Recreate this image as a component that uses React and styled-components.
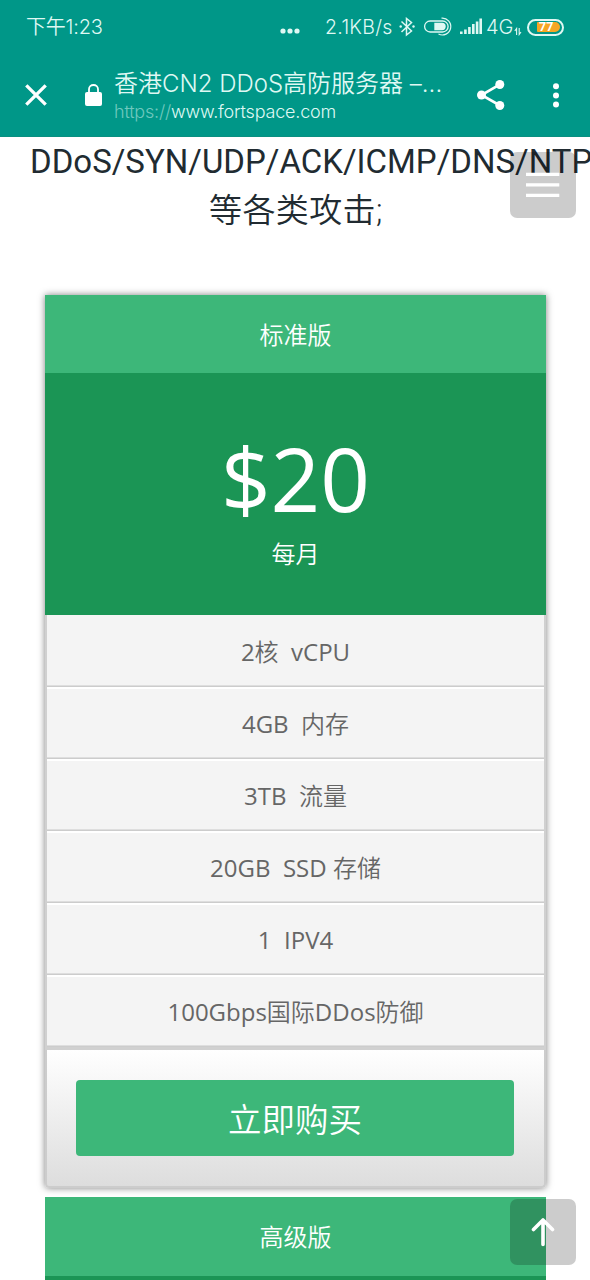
import styled, {createGlobalStyle} from 'styled-components'

const features = [
  '2核\u00a0 vCPU',
  '4GB\u00a0 内存',
  '3TB\u00a0 流量',
  '20GB\u00a0 SSD 存储',
  '1\u00a0 IPV4',
  '100Gbps国际DDos防御',
]

// chinese runs are set a little lighter than the latin ones
const splitHan = (text) => text.split(/([\u4e00-\u9fff]+)/)

const StatusBar = () => {
  return (
    <Status>
      <Clock>下午1:23</Clock>
      <StatusIcons>
        <svg width='20' height='6' viewBox='0 0 20 6' fill='#dff8f3'>
          <circle cx='3' cy='3' r='2.6' />
          <circle cx='10' cy='3' r='2.6' />
          <circle cx='17' cy='3' r='2.6' />
        </svg>
        <Speed>2.1KB/s</Speed>
        {/* bluetooth, sync toggle and signal */}
        <svg width='84' height='20' viewBox='398 17 84 20' fill='none' stroke='#dff8f3'>
          <path d='M401.5 21.5 L411.5 31 L406.5 35 V18.5 L411.5 22.5 L401.5 32' strokeWidth='1.5' />
          <circle cx='400.7' cy='26.5' r='1.2' fill='#dff8f3' stroke='none' />
          <circle cx='413.5' cy='26.5' r='1.2' fill='#dff8f3' stroke='none' />
          <rect x='424.6' y='21' width='23.5' height='11' rx='5.5' strokeWidth='1.3' />
          <path d='M434.3 22.8 H442 A3.7 3.7 0 0 1 442 30.2 H434.3 Z' fill='#dff8f3' stroke='none' />
          <path d='M441.5 18.2 A8.4 8.4 0 1 1 438.5 34' strokeWidth='1.2' />
          <path d='M461.3 34 V31.5 M465.4 34 V29.5 M469.4 34 V27 M473.3 34 V24 M477.1 34 V21.5 M480.7 34 V18.5' strokeWidth='2.6' />
        </svg>
        <Network>4G</Network>
        <svg width='8' height='9' viewBox='0 0 8 9' fill='none' stroke='#dff8f3' strokeWidth='1.1'>
          <path d='M2.6 8 V1.5 L.8 4 M5.2 1 V7.5 L7 5' />
        </svg>
        <Battery>
          <Charge>77</Charge>
        </Battery>
      </StatusIcons>
    </Status>
  )
}

const Toolbar = () => {
  return (
    <Bar>
      <svg width='22' height='22' viewBox='0 0 22 22' stroke='#fff' strokeWidth='3.3'>
        <path d='M1.3 1.3 L20.7 20.7 M20.7 1.3 L1.3 20.7' />
      </svg>
      <LockIcon width='17' height='22' viewBox='0 0 17 22'>
        <path d='M4 9 V5.2 a4.5 4.2 0 0 1 9 0 V9' fill='none' stroke='#fff' strokeWidth='1.8' />
        <rect x='0' y='8' width='17' height='14' rx='2' fill='#fff' />
      </LockIcon>
      <Page>
        <Title>香港CN2 DDoS高防服务器 –...</Title>
        <Url><span>https://</span>www.fortspace.com</Url>
      </Page>
      <ShareIcon width='28' height='30' viewBox='0 0 28 30'>
        <path d='M23 4.3 L4.5 15 L23 25.5' fill='none' stroke='#fff' strokeWidth='2.6' />
        <circle cx='22.8' cy='4.5' r='4.5' fill='#fff' />
        <circle cx='4.5' cy='15' r='4.5' fill='#fff' />
        <circle cx='22.8' cy='25.5' r='4.5' fill='#fff' />
      </ShareIcon>
      <svg width='6' height='25' viewBox='0 0 6 25' fill='#fff'>
        <circle cx='3' cy='3.3' r='3' />
        <circle cx='3' cy='12.4' r='3' />
        <circle cx='3' cy='21.5' r='3' />
      </svg>
    </Bar>
  )
}

const App = () => {
  return (
    <Wrapper>
      <GlobalStyle />
      <Header>
        <StatusBar />
        <Toolbar />
      </Header>
      <Intro>
        <Protocols>DDoS/SYN/UDP/ACK/ICMP/DNS/NTP</Protocols>
        <Attacks>等各类攻击;</Attacks>
      </Intro>
      <Plans>
        <Card>
          <PlanName>标准版</PlanName>
          <PriceBox>
            <Price>$20</Price>
            <Period>每月</Period>
          </PriceBox>
          <Features>
            {features.map((item) => (
              <li key={item}>
                {splitHan(item).map((part, i) =>
                  i % 2 ? <Han key={i}>{part}</Han> : part
                )}
              </li>
            ))}
          </Features>
          <CardFooter>
            <BuyButton type='button'>立即购买</BuyButton>
          </CardFooter>
        </Card>
        <Card $flat>
          <PlanName $tall>高级版</PlanName>
          <PriceBox />
        </Card>
      </Plans>
      <FloatButton $top='152px' aria-label='menu'>
        <svg width='34' height='26' viewBox='0 0 34 26' stroke='#fff' strokeWidth='3.3'>
          <path d='M0 2.4 H33.3 M0 12.8 H33.3 M0 23.3 H33.3' />
        </svg>
      </FloatButton>
      <FloatButton $top='1199px' aria-label='back to top'>
        <svg width='24' height='30' viewBox='0 0 24 30' fill='none' stroke='#fff' strokeWidth='3.6' strokeLinecap='round' strokeLinejoin='round'>
          <path d='M12 27.5 V3 M2.5 12.5 L12 3 L21.5 12.5' />
        </svg>
      </FloatButton>
    </Wrapper>
  )
}

const GlobalStyle = createGlobalStyle`
  * {
    box-sizing: border-box;
  }
  body {
    margin: 0;
    background: #fff;
    font-family: 'Open Sans', 'Noto Sans CJK SC', sans-serif;
  }
`

const Wrapper = styled.main`
  position: relative;
  width: 590px;
  height: 1280px;
  overflow: hidden;
`

const Header = styled.header`
  height: 137px;
  background: #009788;
  border-bottom: 1px solid #0a9081;
  color: #dff8f3;
  font-family: Inter, 'Noto Sans CJK SC', sans-serif;
  font-weight: 350;
  white-space: nowrap;
`

const Status = styled.div`
  display: flex;
  justify-content: space-between;
  height: 54px;
  padding: 0 26px;
`

const Clock = styled.div`
  font-size: 20px;
  line-height: 55px;
  letter-spacing: -0.2px;
`

const StatusIcons = styled.div`
  display: flex;
  align-items: center;
  > svg:first-child {
    margin: 8px 25px 0 0;
  }
  > svg:nth-of-type(3) {
    margin: 8px 5px 0 0;
  }
`

const Speed = styled.span`
  width: 73px;
  font-size: 19.5px;
  letter-spacing: 0.3px;
`

const Network = styled.span`
  width: 32px;
  padding-left: 4px;
  font-size: 20px;
`

const Battery = styled.div`
  width: 37px;
  height: 17px;
  padding: 1.5px 2px;
  border: 2px solid #dff8f3;
  border-radius: 9px;
`

const Charge = styled.div`
  width: 23px;
  height: 10px;
  margin-left: 6px;
  padding-left: 2px;
  border-radius: 1px 5px 5px 1px;
  background: #f5a623;
  color: #fff;
  font-family: Roboto, sans-serif;
  font-size: 12.5px;
  font-weight: 700;
  line-height: 10px;
`

const Bar = styled.div`
  display: flex;
  align-items: center;
  height: 82px;
  padding: 0 31px 0 25px;
`

const LockIcon = styled.svg`
  margin-left: 38px;
`

const Page = styled.div`
  width: 335px;
  margin: 2px 0 0 12px;
`

const Title = styled.div`
  font-size: 24px;
  line-height: 30px;
`

const Url = styled.div`
  font-size: 18px;
  line-height: 24px;
  letter-spacing: -0.2px;
  margin-top: 1px;
  span {
    color: #6fc8be;
  }
`

const ShareIcon = styled.svg`
  margin: 0 48px 0 28px;
`

const Intro = styled.section`
  height: 158px;
  padding-top: 1px;
  font-family: Roboto, 'Noto Sans CJK SC', sans-serif;
  color: #212b31;
  font-size: 33px;
  line-height: 48px;
  white-space: nowrap;
`

const Protocols = styled.div`
  padding-left: 30px;
`

const Attacks = styled.div`
  padding: 1px 0 0 209px;
  font-weight: 350;
  letter-spacing: 0.4px;
`

const Plans = styled.section`
  display: flex;
  flex-direction: column;
  gap: 9px;
  padding: 0 44px 0 45px;
`

const Card = styled.article`
  box-shadow: ${(props) => (props.$flat ? 'none' : '0 0 7px rgba(0, 0, 0, 0.5)')};
  border-radius: 0 0 4px 4px;
  text-align: center;
`

const PlanName = styled.div`
  height: ${(props) => (props.$tall ? '79px' : '78px')};
  background: #3db779;
  color: #fff;
  font-size: 24px;
  font-weight: 350;
  line-height: 80px;
`

const PriceBox = styled.div`
  height: 242px;
  padding-top: 59px;
  background: #1b9555;
  color: #fff;
`

const Price = styled.div`
  font-size: 87px;
  line-height: 92px;
`

const Period = styled.div`
  font-size: 24px;
  font-weight: 350;
  line-height: 34px;
  margin-top: 13px;
`

const Features = styled.ul`
  margin: 0;
  padding: 0;
  list-style: none;
  border: 2px solid #d0d0d0;
  border-width: 0 2px 3px;
  background: #f4f4f4;
  color: #666;
  font-size: 24px;
  li {
    height: 72px;
    border-top: 2px solid #fff;
    border-bottom: 1px solid #ccc;
    box-shadow: inset 0 -1px #dedede;
    line-height: 69px;
  }
  li:first-child {
    border-top-color: #f4f4f4;
  }
`

const Han = styled.span`
  font-weight: 350;
`

const CardFooter = styled.div`
  height: 138px;
  padding: 30px 0 0 29px;
  border: 2px solid #ccc;
  border-top: 0;
  border-radius: 0 0 4px 4px;
  background: linear-gradient(#fff, #ddd);
`

const BuyButton = styled.button`
  display: block;
  width: 438px;
  height: 76px;
  padding: 0 0 2px;
  border: 0;
  border-radius: 4px;
  background: #3db779;
  color: #fff;
  font-family: inherit;
  font-size: 33.5px;
  font-weight: 350;
`

const FloatButton = styled.div`
  position: absolute;
  top: ${(props) => props.$top};
  left: 510px;
  display: grid;
  place-items: center;
  width: 66px;
  height: 66px;
  border-radius: 7px;
  background: rgba(0, 0, 0, 0.2);
`

export default App
